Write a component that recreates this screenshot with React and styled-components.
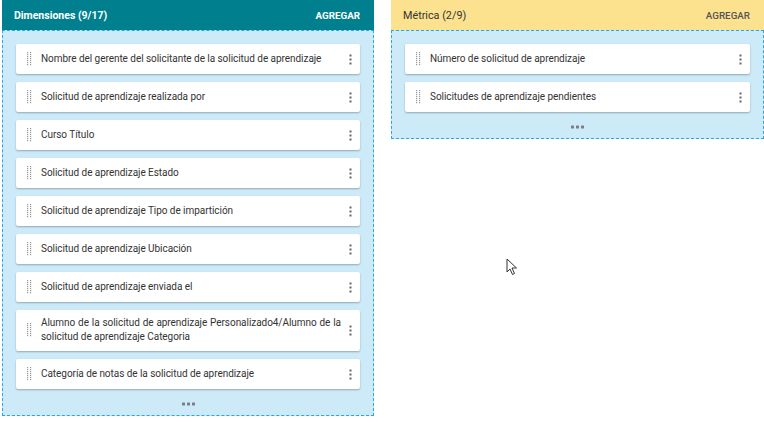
import React from "react";
import styled, { createGlobalStyle } from "styled-components";

const GlobalStyle = createGlobalStyle`
  html, body {
    margin: 0;
    padding: 0;
    background: #ffffff;
    font-family: Roboto, "Liberation Sans", Arial, sans-serif;
  }
`;

const Page = styled.div`
  position: relative;
  display: flex;
  align-items: flex-start;
  gap: 17px;
  padding-left: 2px;
  width: 764px;
  height: 423px;
  box-sizing: border-box;
  overflow: hidden;
`;

const Panel = styled.div`
  flex: 0 0 ${(p) => p.width}px;
  display: flex;
  flex-direction: column;
`;

const Header = styled.div`
  height: 30px;
  display: flex;
  align-items: center;
  justify-content: space-between;
  padding: 0 14px 0 12px;
  background: ${(p) => p.bg};
  color: ${(p) => p.fg};
  font-size: ${(p) => (p.bold ? "10.5px" : "10.8px")};
  font-weight: ${(p) => (p.bold ? 700 : 400)};
`;

const AddButton = styled.span`
  font-size: 9.8px;
  font-weight: ${(p) => (p.bold ? 700 : 500)};
  text-transform: uppercase;
  color: ${(p) => p.color};
`;

const Body = styled.div`
  background: #cdeaf8;
  border: 1px dashed #2ba7df;
  padding: 13px 13px 0 13px;
  display: flex;
  flex-direction: column;
  gap: 8px;
`;

const Card = styled.div`
  background: #fff;
  border-radius: 2px;
  box-shadow: 0 1px 2px rgba(0, 0, 0, 0.28);
  min-height: 30px;
  padding: ${(p) => (p.tall ? "6px 0 7px" : "0")};
  box-sizing: border-box;
  display: flex;
  align-items: center;
`;

const Handle = styled.div`
  flex: 0 0 25px;
  display: flex;
  justify-content: center;
  padding-left: 2px;
  box-sizing: border-box;
`;

const Label = styled.div`
  flex: 1;
  font-size: 10px;
  line-height: 14px;
  letter-spacing: -0.05px;
  color: #333;
  text-align: justify;
`;

const Menu = styled.div`
  flex: 0 0 18px;
  display: flex;
  justify-content: center;
  padding-right: 1px;
`;

const More = styled.div`
  height: 22px;
  display: flex;
  align-items: center;
  justify-content: center;
  margin-top: -4px;
`;

const Cursor = styled.svg`
  position: absolute;
  left: 506px;
  top: 258px;
`;

const GripIcon = () => (
  <svg width="5" height="14" viewBox="0 0 5 14">
    {[0, 1, 2, 3, 4, 5, 6].map((r) =>
      [0, 1].map((c) => (
        <rect key={r + "-" + c} x={c * 3} y={r * 2} width="1.2" height="1.2" fill="#9a9a9a" />
      ))
    )}
  </svg>
);

const KebabIcon = () => (
  <svg width="3" height="11" viewBox="0 0 3 11">
    <rect x="0.5" y="0.5" width="2" height="2" fill="#666" />
    <rect x="0.5" y="4.5" width="2" height="2" fill="#666" />
    <rect x="0.5" y="8.5" width="2" height="2" fill="#666" />
  </svg>
);

const DotsIcon = () => (
  <svg width="13" height="4" viewBox="0 0 13 4">
    <rect x="0" y="0.5" width="3" height="3" rx="0.5" fill="#7a7f85" />
    <rect x="5" y="0.5" width="3" height="3" rx="0.5" fill="#7a7f85" />
    <rect x="10" y="0.5" width="3" height="3" rx="0.5" fill="#7a7f85" />
  </svg>
);

const dimensions = [
  "Nombre del gerente del solicitante de la solicitud de aprendizaje",
  "Solicitud de aprendizaje realizada por",
  "Curso Título",
  "Solicitud de aprendizaje Estado",
  "Solicitud de aprendizaje Tipo de impartición",
  "Solicitud de aprendizaje Ubicación",
  "Solicitud de aprendizaje enviada el",
  "Alumno de la solicitud de aprendizaje Personalizado4/Alumno de la solicitud de aprendizaje Categoria",
  "Categoría de notas de la solicitud de aprendizaje",
];

const metrics = [
  "Número de solicitud de aprendizaje",
  "Solicitudes de aprendizaje pendientes",
];

const Item = ({ text }) => (
  <Card tall={text.length > 70}>
    <Handle>
      <GripIcon />
    </Handle>
    <Label>{text}</Label>
    <Menu>
      <KebabIcon />
    </Menu>
  </Card>
);

const Column = ({ title, width, bg, fg, addColor, bold, items }) => (
  <Panel width={width}>
    <Header bg={bg} fg={fg} bold={bold}>
      <span>{title}</span>
      <AddButton color={addColor} bold={bold}>Agregar</AddButton>
    </Header>
    <Body>
      {items.map((t) => (
        <Item key={t} text={t} />
      ))}
      <More>
        <DotsIcon />
      </More>
    </Body>
  </Panel>
);

export default function App() {
  return (
    <>
      <GlobalStyle />
      <Page>
        <Column
          title="Dimensiones (9/17)"
          width={372}
          bg="#007f8e"
          fg="#ffffff"
          addColor="#ffffff"
          bold
          items={dimensions}
        />
        <Column
          title="Métrica (2/9)"
          width={373}
          bg="#fce18f"
          fg="#333333"
          addColor="#555555"
          items={metrics}
        />
        <Cursor width="12" height="18" viewBox="0 0 12 18">
          <path
            d="M1 1 L1 14 L4 11 L6.5 16.5 L8.5 15.5 L6 10 L10.5 10 Z"
            fill="#fff"
            stroke="#333"
            strokeWidth="1"
            strokeLinejoin="round"
          />
        </Cursor>
      </Page>
    </>
  );
}
